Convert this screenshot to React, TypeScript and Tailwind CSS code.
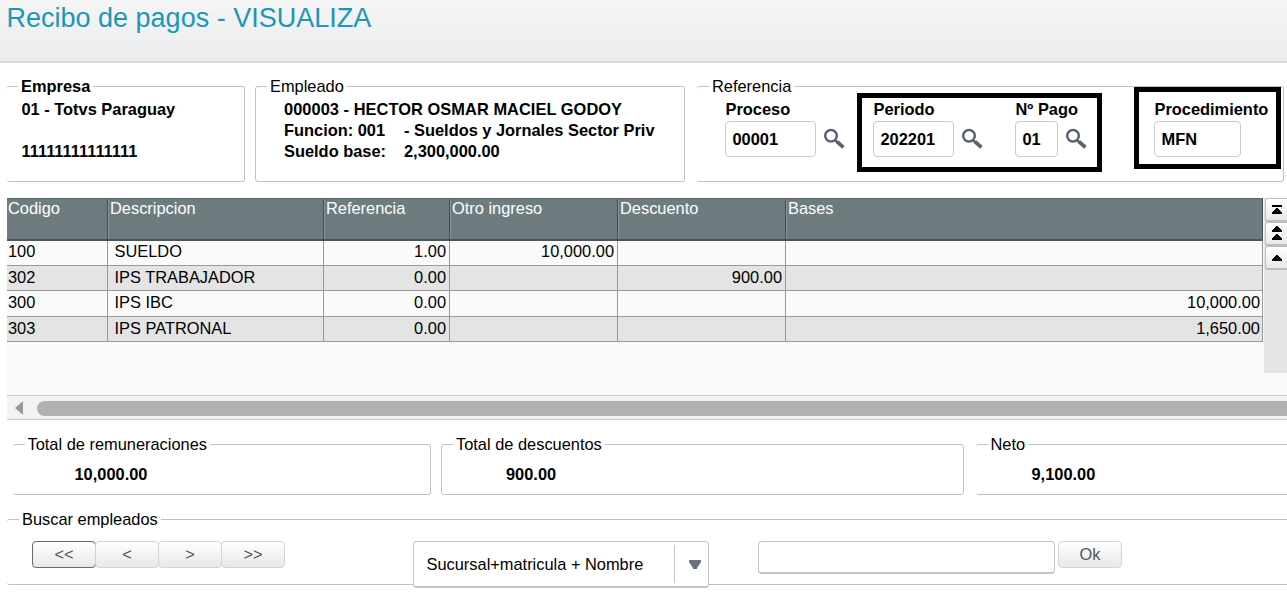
import type { ReactNode } from "react";

const COLUMNS = [
  { label: "Codigo",       width: "w-[101px]", align: "pl-[1px]" },
  { label: "Descripcion",  width: "w-[216px]", align: "pl-[6.5px]" },
  { label: "Referencia",   width: "w-[126px]", align: "text-right pr-[3px]" },
  { label: "Otro ingreso", width: "w-[168px]", align: "text-right pr-[3px]" },
  { label: "Descuento",    width: "w-[168px]", align: "text-right pr-[3px]" },
  { label: "Bases",        width: "w-[477px]", align: "text-right pr-[2px]" },
];

const ROWS = [
  { height: "h-[25px] leading-[21px]", bg: "bg-[#fafafa]", cells: ["100", "SUELDO", "1.00", "10,000.00", "", ""] },
  { height: "h-[25px] leading-[22px]", bg: "bg-[#e4e4e4]", cells: ["302", "IPS TRABAJADOR", "0.00", "", "900.00", ""] },
  { height: "h-[26px] leading-[22px]", bg: "bg-[#fafafa]", cells: ["300", "IPS IBC", "0.00", "", "", "10,000.00"] },
  { height: "h-[25px] leading-[22px]", bg: "bg-[#e4e4e4]", cells: ["303", "IPS PATRONAL", "0.00", "", "", "1,650.00"] },
];

function Group({ title, className = "", legendClass = "", children }: {
  title: string;
  className?: string;
  legendClass?: string;
  children: ReactNode;
}) {
  return (
    <fieldset className={`shrink-0 min-w-0 rounded-[3px] border border-[#c1c1c1] ${className}`}>
      <legend className={`h-[21px] px-[3px] leading-[21px] whitespace-nowrap ${legendClass}`}>{title}</legend>
      {children}
    </fieldset>
  );
}

function SearchIcon() {
  return (
    <svg viewBox="0 0 22 22" className="mt-[7px] ml-[7px] h-[22px] w-[22px] shrink-0" fill="none" aria-hidden="true">
      <circle cx="8" cy="7.7" r="5.8" stroke="#5b6270" strokeWidth="2.5" />
      <path d="M12 12 L15 15" stroke="#5b6270" strokeWidth="2.6" />
      <path d="M14 13.6 L20.4 19.4" stroke="#5b6270" strokeWidth="3.8" />
    </svg>
  );
}

function Field({ label, value, width, search }: { label: string; value: string; width: string; search?: boolean }) {
  return (
    <div className="shrink-0 font-bold">
      <div className="h-[22px] pl-[0.5px] leading-[21px] whitespace-nowrap">{label}</div>
      <div className="flex">
        <div className={`h-9 rounded-[4px] border-[1.5px] border-[#c8cacd] bg-white pl-[6.5px] leading-[35px] ${width}`}>{value}</div>
        {search && <SearchIcon />}
      </div>
    </div>
  );
}

function ScrollButton({ children }: { children: ReactNode }) {
  return (
    <div className="h-6 w-[24px] rounded-[3px] border border-b-2 border-[#bdbdbd] bg-gradient-to-b from-white to-[#e8e8e8]">
      <svg viewBox="0 0 22 21" className="h-[21px] w-[22px]" fill="#000" shapeRendering="crispEdges" aria-hidden="true">{children}</svg>
    </div>
  );
}

function Button({ label, active }: { label: string; active?: boolean }) {
  return (
    <button
      className={`h-[27px] w-[64px] shrink-0 rounded-[4px] border-[1.5px] bg-gradient-to-b from-white to-[#e8e8e8] pb-[2px] leading-[22px] text-[#50555e] ${
        active ? "border-[#646a76]" : "border-[#d4d4d4]"}`}>
      {label}
    </button>
  );
}

export default function App() {
  return (
    <div className="flex h-[596px] w-[1287px] flex-col overflow-hidden bg-white font-['Liberation_Sans',Arial,sans-serif] text-[16.4px] text-black">
      <header className="h-[63px] shrink-0 border-b-2 border-[#d9dbdd] bg-gradient-to-b from-[#f5f5f6] to-[#ebecee] pl-[6.5px]">
        <h1 className="text-[27px] leading-[37px] text-[#1b97b7]">Recibo de pagos - VISUALIZA</h1>
      </header>

      <div className="mt-[13px] flex h-[106px] shrink-0 pl-[7px]">
        <Group title="Empresa" className="h-[106px] w-[238px] border-l-0 pl-[11px]" legendClass="font-bold">
          <div className="pt-[2px] pl-[3.5px] font-bold leading-[21px]">
            <p>01 - Totvs Paraguay</p>
            <p className="mt-[21px]">11111111111111</p>
          </div>
        </Group>

        <Group title="Empleado" className="ml-[10px] h-[106px] w-[430px] pl-[11px]">
          <div className="pt-[2px] pl-[17px] font-bold leading-[21px] whitespace-nowrap">
            <p className="tracking-[0.05px]">000003 - HECTOR OSMAR MACIEL GODOY</p>
            <p className="flex"><span className="w-[120px]">Funcion: 001</span><span>- Sueldos y Jornales Sector Priv</span></p>
            <p className="flex"><span className="w-[120px]">Sueldo base:</span><span>2,300,000.00</span></p>
          </div>
        </Group>

        <Group title="Referencia" className="ml-[12px] h-[106px] w-[587px] border-l-0 pl-[12px]">
          <div className="flex pt-[2px] pl-[16px]">
            <Field label="Proceso" value="00001" width="w-[91px]" search />
            <div className="relative ml-[28px] flex">
              <Field label="Periodo" value="202201" width="w-[81px]" search />
              <div className="ml-[32px] w-[73px]">
                <Field label="Nº Pago" value="01" width="w-[43px]" search />
              </div>
              <div className="absolute -top-[6px] -left-[16px] h-[79px] w-[245px] border-5 border-black" />
            </div>
            <div className="relative ml-[66px]">
              <Field label="Procedimiento" value="MFN" width="w-[87px]" />
              <div className="absolute -top-[12px] -left-[20px] h-[82px] w-[147px] border-5 border-black" />
            </div>
          </div>
        </Group>
      </div>

      {/* Receipt lines */}
      <div className="mt-4 ml-[7px] flex h-[197px] shrink-0 bg-[#f9f9f9]">
        <div className="w-[1256px] shrink-0">
          <div className="flex h-[43px] border-t border-b-2 border-t-[#59656a] border-b-[#4b5458] bg-[#6e7c80] text-white">
            {COLUMNS.map((col) => (
              <div key={col.label} className={`shrink-0 border-r border-r-[#454d51] border-l border-l-[#89959a] pl-px leading-[19px] first:border-l-0 ${col.width}`}>
                {col.label}
              </div>
            ))}
          </div>
          {ROWS.map((row) => (
            <div key={row.cells[0]} className={`flex ${row.height} ${row.bg}`}>
              {row.cells.map((cell, i) => (
                <div key={COLUMNS[i].label} className={`shrink-0 border-r border-b border-[#999] ${COLUMNS[i].width} ${COLUMNS[i].align}`}>
                  {cell}
                </div>
              ))}
            </div>
          ))}
        </div>
        <div className="ml-[1px] h-[175px] w-[24px] shrink-0 bg-[#e4e4e4] pl-[1px]">
          <ScrollButton>
            <path d="M6 6h10v2H6z M10 9h2v1h1v1h1v1h1v1h1v2H6v-2h1v-1h1v-1h1v-1h1z" />
          </ScrollButton>
          <ScrollButton>
            <path d="M10 3h2v1h1v1h1v1h1v1h1v2H6v-2h1v-1h1v-1h1v-1h1z M10 11h2v1h1v1h1v1h1v1h1v2H6v-2h1v-1h1v-1h1v-1h1z" />
          </ScrollButton>
          <ScrollButton>
            <path d="M10 8h2v1h1v1h1v1h1v1h1v2H6v-2h1v-1h1v-1h1v-1h1z" />
          </ScrollButton>
        </div>
      </div>
      <div className="ml-[7px] flex h-[25px] shrink-0 items-center border-y border-[#c8c8c8] bg-[#f3f3f3] pt-px">
        <svg viewBox="0 0 8 14" className="ml-[8px] h-[14px] w-2" aria-hidden="true">
          <path d="M0 7 8 0v14z" fill="#999" />
        </svg>
        <div className="ml-[14px] h-[15px] flex-1 rounded-l-full bg-[#b1b1b1]" />
      </div>

      {/* Totals */}
      <div className="mt-[14px] flex h-[61px] shrink-0 pl-[13px]">
        <Group title="Total de remuneraciones" className="h-[61px] w-[418px] border-l-0 pl-[11.5px]">
          <p className="pt-[9px] pl-[50px] font-bold leading-[21px]">10,000.00</p>
        </Group>
        <Group title="Total de descuentos" className="ml-[10px] h-[61px] w-[523px] pl-[11px]">
          <p className="pt-[9px] pl-[53px] font-bold leading-[21px]">900.00</p>
        </Group>
        <Group title="Neto" className="ml-[12px] h-[61px] w-[330px] border-l-0 pl-[11.5px]">
          <p className="pt-[9px] pl-[44px] font-bold leading-[21px]">9,100.00</p>
        </Group>
      </div>

      {/* Employee search */}
      <Group title="Buscar empleados" className="mt-[14px] ml-[7px] h-[76px] w-[1300px] border-l-0 pl-[12px]">
        <div className="flex items-start pt-[11px] pl-[13px]">
          <Button label="<<" active />
          <div className="-ml-px flex -space-x-px">
            <Button label="<" />
            <Button label=">" />
            <Button label=">>" />
          </div>
          <div className="ml-[128px] flex h-[47px] w-[296px] shrink-0 rounded-[4px] border-[1.5px] border-b-2 border-[#c3c5c7] bg-white">
            <div className="my-[3px] w-[261px] border-r border-[#c3c5c7] pl-[12.5px] leading-[39px]">Sucursal+matricula + Nombre</div>
            <svg viewBox="0 0 12 9" className="mt-[18px] ml-[14px] h-[9px] w-3" aria-hidden="true">
              <path d="M0 0h12v2L8 8v1H4V8L0 2z" fill="#6b717c" />
            </svg>
          </div>
          <div className="ml-[49px] h-[33px] w-[297px] shrink-0 rounded-[4px] border-[1.5px] border-b-2 border-[#c3c5c7] bg-white" />
          <div className="ml-[3px]">
            <Button label="Ok" />
          </div>
        </div>
      </Group>
    </div>
  );
}
